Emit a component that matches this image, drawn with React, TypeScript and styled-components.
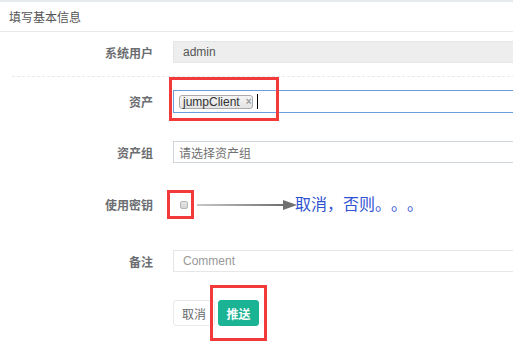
import React from 'react';
import styled, { createGlobalStyle } from 'styled-components';

const GlobalStyle = createGlobalStyle`
  html, body {
    margin: 0;
    padding: 0;
    background: #fff;
    overflow: hidden;
  }
  body {
    font-family: "Liberation Sans", "Noto Sans CJK SC", sans-serif;
    font-size: 12px;
    color: #676a6c;
  }
`;

const Page = styled.div`
  width: 530px;
  height: 346px;
  background: #fff;
`;

const PanelTitle = styled.div`
  height: 29px;
  display: flex;
  align-items: center;
  padding-left: 9px;
  border-top: 2px solid #e7eaec;
  border-bottom: 1px solid #e7eaec;
  color: #555;
  font-size: 12px;
`;

const FormBody = styled.div`
  display: flex;
  flex-direction: column;
`;

const FormRow = styled.div<{ $top: number; $height?: number }>`
  display: flex;
  flex-direction: row;
  align-items: center;
  margin-top: ${(p) => p.$top}px;
  height: ${(p) => p.$height ?? 22}px;
`;

const Label = styled.label`
  width: 153px;
  flex-shrink: 0;
  text-align: right;
  font-weight: bold;
  font-size: 12px;
  color: #6b6d70;
  padding-right: 20px;
  box-sizing: content-box;
`;

const Control = styled.div`
  position: relative;
  flex: 1;
  height: 100%;
  display: flex;
  align-items: center;
`;

const TextInput = styled.div<{ $disabled?: boolean; $placeholder?: boolean }>`
  box-sizing: border-box;
  width: 100%;
  height: 100%;
  display: flex;
  align-items: center;
  padding-left: 9px;
  border: 1px solid #e5e6e7;
  background: ${(p) => (p.$disabled ? '#eeeeee' : '#fff')};
  color: ${(p) => (p.$placeholder ? '#999' : '#555')};
  font-size: 12px;
`;

const FocusedInput = styled(TextInput)`
  border-color: #6a9de0;
  padding-left: 5px;
  gap: 4px;
`;

const GroupInput = styled(TextInput)`
  border-color: #cfd6de;
  padding-left: 5px;
  color: #707070;
`;

const Tag = styled.span`
  box-sizing: border-box;
  height: 14px;
  width: 74px;
  display: inline-flex;
  align-items: center;
  padding: 0 4px 0 3px;
  gap: 6px;
  border: 1px solid #aaa;
  border-radius: 3px;
  background: linear-gradient(#f4f4f4, #e4e4e4);
  color: #333;
  font-size: 12px;
  line-height: 12px;
  span {
    color: #999;
    font-size: 10px;
    font-weight: bold;
  }
`;

const Caret = styled.span`
  display: inline-block;
  width: 1px;
  height: 15px;
  background: #000;
`;

const Dashed = styled.div`
  margin: 13px 0 0 12px;
  border-top: 1px dashed #e7eaec;
  height: 0;
`;

const Checkbox = styled.span`
  box-sizing: border-box;
  display: inline-block;
  width: 8px;
  height: 8px;
  margin-left: 7px;
  border: 1px solid #b5b5b5;
  border-radius: 2px;
  background: linear-gradient(#e6e6e6, #d4d4d4);
`;

const ArrowSvg = styled.svg`
  margin-left: 9px;
  flex-shrink: 0;
`;

const Note = styled.span`
  margin-left: -2px;
  margin-top: -4px;
  font-family: "Noto Sans CJK SC", sans-serif;
  font-weight: 400;
  font-size: 16px;
  color: #2f52d2;
  text-spacing-trim: space-all;
  font-feature-settings: "halt" 0, "chws" 0;
`;

const RedBox = styled.div<{ $l: number; $t: number; $w: number; $h: number }>`
  position: absolute;
  left: ${(p) => p.$l}px;
  top: ${(p) => p.$t}px;
  width: ${(p) => p.$w}px;
  height: ${(p) => p.$h}px;
  box-sizing: border-box;
  border: 3px solid #f23a3a;
  pointer-events: none;
`;

const ButtonBar = styled.div`
  display: flex;
  flex-direction: row;
  gap: 3px;
  margin: 28px 0 0 173px;
  height: 26px;
`;

const Button = styled.button<{ $primary?: boolean }>`
  position: relative;
  box-sizing: border-box;
  height: 26px;
  width: ${(p) => (p.$primary ? 41 : 42)}px;
  padding: 0;
  border-radius: 3px;
  font-family: "Noto Sans CJK SC", sans-serif;
  font-size: 12px;
  font-weight: ${(p) => (p.$primary ? 'bold' : 'normal')};
  border: 1px solid ${(p) => (p.$primary ? '#1ab394' : '#e7eaec')};
  background: ${(p) => (p.$primary ? '#1ab394' : '#fff')};
  color: ${(p) => (p.$primary ? '#fff' : '#676a6c')};
`;

const App = () => {
  return (
    <Page>
      <GlobalStyle />
      <PanelTitle>填写基本信息</PanelTitle>
      <FormBody>
        <FormRow $top={9}>
          <Label>系统用户</Label>
          <Control>
            <TextInput $disabled>admin</TextInput>
          </Control>
        </FormRow>
        <Dashed />
        <FormRow $top={13} $height={23}>
          <Label>资产</Label>
          <Control>
            <FocusedInput>
              <Tag>
                jumpClient<span>×</span>
              </Tag>
              <Caret />
            </FocusedInput>
            <RedBox $l={-4} $t={-13} $w={110} $h={44} />
          </Control>
        </FormRow>
        <FormRow $top={28}>
          <Label>资产组</Label>
          <Control>
            <GroupInput>请选择资产组</GroupInput>
          </Control>
        </FormRow>
        <FormRow $top={27} $height={29}>
          <Label>使用密钥</Label>
          <Control>
            <Checkbox />
            <ArrowSvg width="100" height="14" viewBox="0 0 100 14">
              <defs>
                <linearGradient id="arrowFade" x1="0" x2="1" y1="0" y2="0">
                  <stop offset="0" stopColor="#c8c8c8" />
                  <stop offset="1" stopColor="#6e6e6e" />
                </linearGradient>
              </defs>
              <rect x="0" y="6" width="88" height="2" fill="url(#arrowFade)" />
              <path d="M86 2 L100 7 L86 12 Z" fill="#707070" />
            </ArrowSvg>
            <Note>取消，否则。。。</Note>
            <RedBox $l={-6} $t={0} $w={27} $h={29} />
          </Control>
        </FormRow>
        <FormRow $top={31}>
          <Label>备注</Label>
          <Control>
            <TextInput $placeholder>Comment</TextInput>
          </Control>
        </FormRow>
        <ButtonBar>
          <Button>取消</Button>
          <Button $primary>
            推送
            <RedBox $l={-9} $t={-16} $w={57} $h={56} />
          </Button>
        </ButtonBar>
      </FormBody>
    </Page>
  );
};

export default App;
